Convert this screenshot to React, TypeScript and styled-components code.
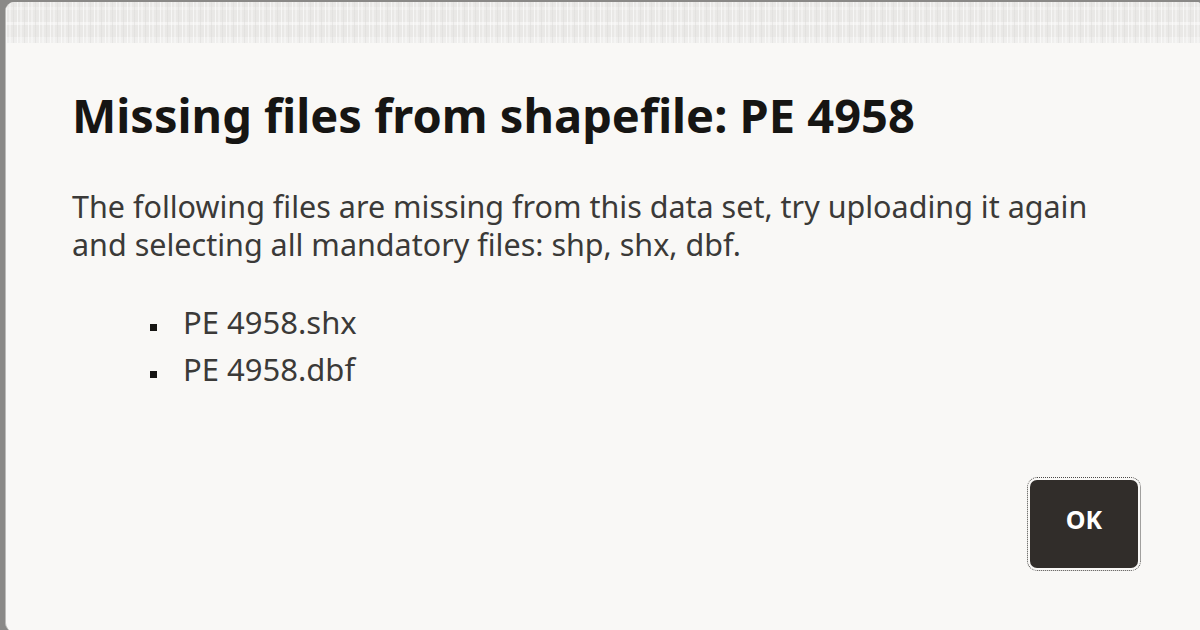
import React from "react";
import styled, { createGlobalStyle } from "styled-components";

const Global = createGlobalStyle`
  html, body { margin: 0; padding: 0; background: #8a8987; overflow: hidden; }
  * { box-sizing: border-box; }
`;

const Page = styled.div`
  width: 1200px;
  height: 630px;
  padding: 2px 0 0 5px;
  overflow: hidden;
`;

const Dialog = styled.div`
  width: 1200px;
  height: 630px;
  background: #f9f8f6;
  border-radius: 9px;
  border-left: 1px solid #bdbcba;
  overflow: hidden;
  display: flex;
  flex-direction: column;
  font-family: "Noto Sans", "Open Sans", sans-serif;
`;

const Header = styled.div`
  height: 41px;
  flex: none;
  background-color: #e9e8e6;
  background-image:
    repeating-linear-gradient(90deg, rgba(255,255,255,0.6) 0 1px, transparent 1px 3px, rgba(255,255,255,0.35) 3px 5px, transparent 5px 7px, rgba(220,219,217,0.5) 7px 8px, transparent 8px 11px),
    linear-gradient(180deg, transparent 0 12%, rgba(255,255,255,0.25) 12% 20%, transparent 20% 48%, rgba(255,255,255,0.45) 48% 56%, transparent 56% 85%, rgba(255,255,255,0.3) 85%);
`;

const Body = styled.div`
  flex: 1;
  display: flex;
  flex-direction: column;
  padding: 44px 67px 64px 66px;
`;

const Title = styled.h1`
  margin: 0;
  font-size: 47px;
  line-height: 56px;
  font-weight: 700;
  color: #161513;
`;

const Message = styled.p`
  margin: 44px 0 0;
  font-size: 30.5px;
  line-height: 38px;
  color: #3b3a38;
  width: 1060px;
`;

const FileList = styled.ul`
  margin: 36px 0 0;
  padding: 0 0 0 111px;
  list-style: none;
`;

const FileItem = styled.li`
  position: relative;
  font-size: 31px;
  line-height: 47px;
  color: #3b3a38;
  &::before {
    content: "";
    position: absolute;
    left: -33px;
    top: 25px;
    width: 7px;
    height: 7px;
    background: #161513;
  }
`;

const Footer = styled.div`
  margin-top: auto;
  display: flex;
  justify-content: flex-end;
`;

const OkButton = styled.button`
  width: 108px;
  height: 88px;
  padding: 0 0 10px;
  border: none;
  border-radius: 7px;
  background: #312d2a;
  color: #ffffff;
  font-family: "Noto Sans", "Open Sans", sans-serif;
  font-weight: 700;
  font-size: 25px;
  outline: 1px dotted #4a4846;
  outline-offset: 2px;
  cursor: pointer;
`;

export default function App() {
  return (
    <>
      <Global />
      <Page>
        <Dialog>
          <Header />
          <Body>
            <Title>Missing files from shapefile: PE 4958</Title>
            <Message>
              The following files are missing from this data set, try uploading it again and selecting all mandatory files: shp, shx, dbf.
            </Message>
            <FileList>
              <FileItem>PE 4958.shx</FileItem>
              <FileItem>PE 4958.dbf</FileItem>
            </FileList>
            <Footer>
              <OkButton>OK</OkButton>
            </Footer>
          </Body>
        </Dialog>
      </Page>
    </>
  );
}
